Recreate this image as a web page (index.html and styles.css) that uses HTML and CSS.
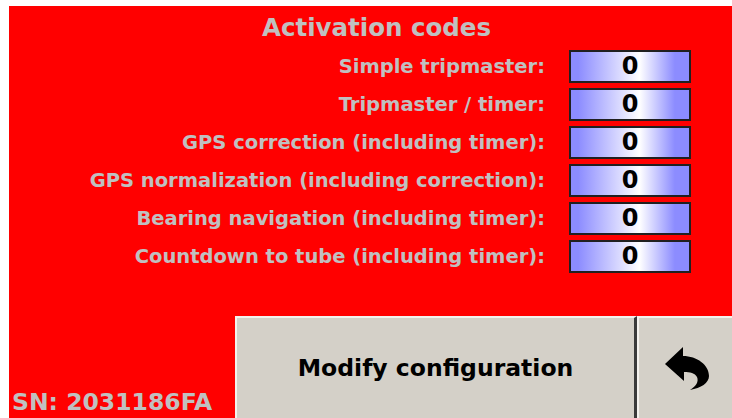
FILE: index.html
```html
<!DOCTYPE html>
<html>
<head>
    <title>Activation codes</title>
    <link rel="stylesheet" href="styles.css">
</head>
<body>
    <div class="screen">
        <h1 class="title">Activation codes</h1>
        <div class="codes">
            <label class="code-label">Simple tripmaster:</label>
            <div class="code-value">0</div>

            <label class="code-label">Tripmaster / timer:</label>
            <div class="code-value">0</div>

            <label class="code-label">GPS correction (including timer):</label>
            <div class="code-value">0</div>

            <label class="code-label">GPS normalization (including correction):</label>
            <div class="code-value">0</div>

            <label class="code-label">Bearing navigation (including timer):</label>
            <div class="code-value">0</div>

            <label class="code-label">Countdown to tube (including timer):</label>
            <div class="code-value">0</div>
        </div>
        <div class="bottom">
            <div class="serial">SN: 2031186FA</div>
            <button class="btn btn-modify">Modify configuration</button>
            <button class="btn btn-back">
                <svg width="48" height="46" viewBox="0 0 48 46">
                    <path d="M2 19 L20 2 L20 11 C34 11 46 20 46 31 C46 38 38 43 27 45 C33 41 36 37 34 32 C32 28 27 27 21 27 L21 36 Z" fill="#000"/>
                </svg>
            </button>
        </div>
    </div>
</body>
</html>
```

FILE: styles.css
```css
body {
    background: #fff;
    margin: 6px 0 0 9px;
    font-family: "DejaVu Sans", sans-serif;
    font-weight: bold;
}

.screen {
    background: #ff0000;
    display: flex;
    flex-direction: column;
    height: 412px;
}

.title {
    color: #c0c0c0;
    font-size: 24.5px;
    height: 44px;
    line-height: 44px;
    margin: 0;
    padding-left: 12px;
    text-align: center;
}

.codes {
    display: grid;
    grid-template-columns: 1fr 122px;
    column-gap: 24px;
    row-gap: 5px;
    padding-right: 41px;
}

.code-label {
    color: #c0c0c0;
    font-size: 19.5px;
    line-height: 33px;
    text-align: right;
    white-space: nowrap;
}

.code-value {
    background: linear-gradient(to right, #8c8cff 6%, #fff 58%, #8c8cff 88%);
    border: 2px solid #202020;
    box-sizing: border-box;
    color: #000;
    font-size: 24px;
    height: 33px;
    line-height: 29px;
    text-align: center;
}

.bottom {
    display: flex;
    height: 102px;
    margin-top: auto;
}

.serial {
    align-self: flex-end;
    color: #c0c0c0;
    flex: 1;
    font-size: 23.5px;
    line-height: 32px;
    padding-left: 3px;
    white-space: nowrap;
}

.btn {
    background: #d4d0c8;
    border: none;
    border-left: 2px solid #f4f2ee;
    border-top: 2px solid #f4f2ee;
    font-family: inherit;
    font-weight: bold;
    margin: 0;
    padding: 0;
}

.btn-modify {
    border-right: 3px solid #3a3a3a;
    font-size: 23.5px;
    width: 402px;
}

.btn-back {
    align-items: center;
    display: flex;
    justify-content: center;
    padding-left: 3px;
    width: 95px;
}
```
